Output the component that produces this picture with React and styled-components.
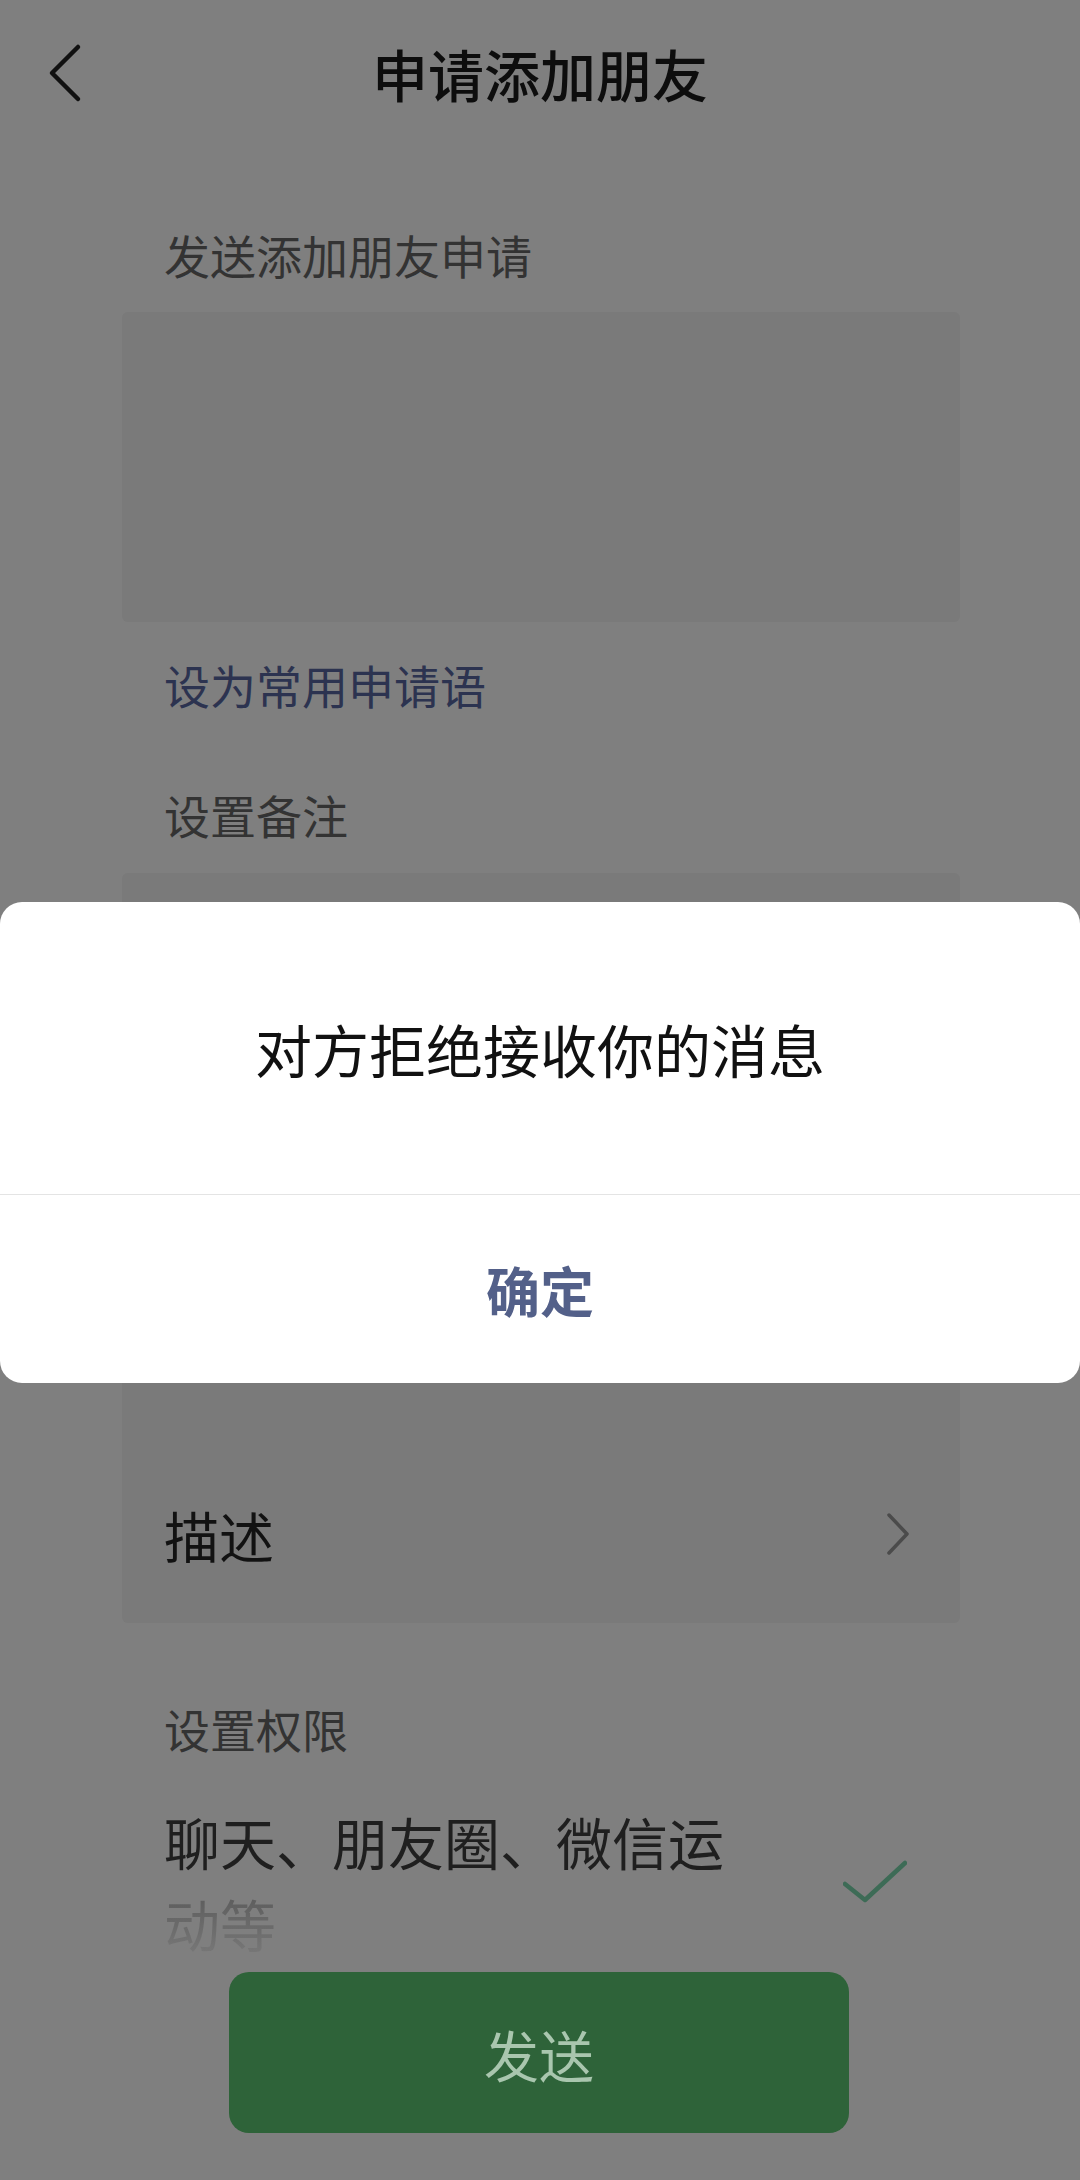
import React from "react";
import styled, { createGlobalStyle } from "styled-components";

const GlobalStyle = createGlobalStyle`
  html, body {
    margin: 0;
    padding: 0;
    background: #7f7f7f;
  }
  body {
    font-family: "Noto Sans CJK SC", "Noto Sans", sans-serif;
  }
`;

const Page = styled.div`
  position: relative;
  width: 1080px;
  height: 2180px;
  display: flex;
  flex-direction: column;
  background: #7f7f7f;
  overflow: hidden;
`;

const Header = styled.header`
  height: 146px;
  display: grid;
  grid-template-columns: 130px 1fr 130px;
  align-items: center;
`;

const BackButton = styled.div`
  padding-left: 48px;
  display: flex;
  align-items: center;
`;

const Title = styled.h1`
  margin: 0;
  text-align: center;
  font-size: 56px;
  font-weight: 500;
  line-height: 80px;
  color: #0d0d0d;
`;

const Content = styled.main`
  flex: 1;
  display: flex;
  flex-direction: column;
  padding: 0 120px 0 122px;
`;

const FieldLabel = styled.div`
  margin-top: ${(p) => p.$mt}px;
  padding-left: 42px;
  font-size: 46px;
  line-height: 64px;
  color: ${(p) => (p.$link ? "#2c3350" : "#333333")};
`;

const InputBox = styled.div`
  margin-top: ${(p) => p.$mt}px;
  height: ${(p) => p.$h}px;
  background: #7a7a7a;
  border-radius: 6px;
`;

const Group = styled.div`
  margin-top: ${(p) => p.$mt}px;
  background: #7a7a7a;
  border-radius: 6px;
  display: flex;
  flex-direction: column;
`;

const Row = styled.div`
  height: ${(p) => p.$h || 178}px;
  padding: 0 50px 0 42px;
  display: flex;
  align-items: center;
  justify-content: space-between;
  font-size: 55px;
  color: #121212;
`;

const PermRow = styled.div`
  margin-top: ${(p) => p.$mt}px;
  padding: 0 53px 0 42px;
  display: flex;
  align-items: center;
  justify-content: space-between;
`;

const PermText = styled.div`
  max-width: 590px;
  font-size: 56px;
  line-height: 82px;
  background: linear-gradient(
    to bottom,
    #1f1f1f 0%,
    #1f1f1f 50%,
    #585858 52%,
    #7c7c7c 100%
  );
  -webkit-background-clip: text;
  background-clip: text;
  color: transparent;
`;

const Footer = styled.div`
  margin-top: auto;
  padding-bottom: 47px;
  display: flex;
  justify-content: center;
`;

const SendButton = styled.button`
  width: 620px;
  height: 161px;
  margin-left: -2px;
  border: none;
  border-radius: 20px;
  background: #2e6339;
  color: #a9c6ae;
  font-family: inherit;
  font-size: 55px;
`;

const Dialog = styled.div`
  position: absolute;
  left: 0;
  top: 902px;
  width: 1080px;
  background: #ffffff;
  border-radius: 22px;
  display: flex;
  flex-direction: column;
`;

const DialogMessage = styled.div`
  height: 292px;
  display: flex;
  align-items: center;
  justify-content: center;
  border-bottom: 1px solid #e4e4e4;
  font-size: 57px;
  color: #111111;
`;

const DialogAction = styled.div`
  height: 188px;
  display: flex;
  align-items: center;
  justify-content: center;
  font-size: 54px;
  font-weight: 700;
  color: #536089;
`;

const ChevronLeft = () => (
  <svg width="36" height="60" viewBox="0 0 36 60">
    <polyline
      points="30,4 4,30 30,56"
      fill="none"
      stroke="#111"
      strokeWidth="4.5"
      strokeLinecap="round"
      strokeLinejoin="round"
    />
  </svg>
);

const ChevronRight = () => (
  <svg width="24" height="44" viewBox="0 0 24 44">
    <polyline
      points="3,3 21,22 3,41"
      fill="none"
      stroke="#4b4b4b"
      strokeWidth="3.5"
      strokeLinecap="round"
      strokeLinejoin="round"
    />
  </svg>
);

const Check = () => (
  <svg width="64" height="48" viewBox="0 0 64 48">
    <polyline
      points="2,26 22,42 62,5"
      fill="none"
      stroke="#3d6b56"
      strokeWidth="4.5"
      strokeLinecap="round"
      strokeLinejoin="round"
    />
  </svg>
);

export default function App() {
  return (
    <>
      <GlobalStyle />
      <Page>
        <Header>
          <BackButton>
            <ChevronLeft />
          </BackButton>
          <Title>申请添加朋友</Title>
          <div />
        </Header>

        <Content>
          <FieldLabel $mt={76}>发送添加朋友申请</FieldLabel>
          <InputBox $mt={26} $h={310} />
          <FieldLabel $mt={30} $link>
            设为常用申请语
          </FieldLabel>

          <FieldLabel $mt={66}>设置备注</FieldLabel>
          <InputBox $mt={27} $h={240} />
          <Group $mt={92}>
            <Row $h={240}>
              标签
              <ChevronRight />
            </Row>
            <Row>
              描述
              <ChevronRight />
            </Row>
          </Group>

          <FieldLabel $mt={73}>设置权限</FieldLabel>
          <PermRow $mt={40}>
            <PermText>聊天、朋友圈、微信运动等</PermText>
            <Check />
          </PermRow>
        </Content>

        <Footer>
          <SendButton>发送</SendButton>
        </Footer>

        <Dialog>
          <DialogMessage>对方拒绝接收你的消息</DialogMessage>
          <DialogAction>确定</DialogAction>
        </Dialog>
      </Page>
    </>
  );
}
